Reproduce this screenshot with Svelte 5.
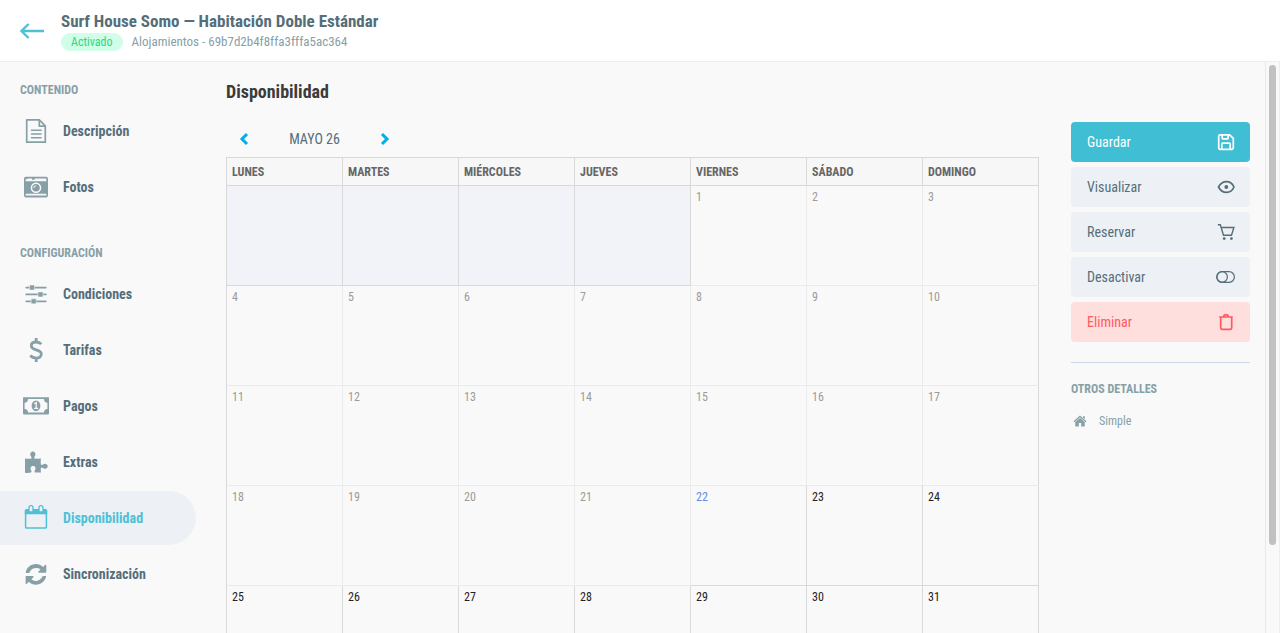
<script>
  const sections = [
    {
      title: 'Contenido',
      items: [
        { id: 'description', label: 'Descripción' },
        { id: 'photos', label: 'Fotos' },
      ],
    },
    {
      title: 'Configuración',
      items: [
        { id: 'conditions', label: 'Condiciones' },
        { id: 'rates', label: 'Tarifas' },
        { id: 'payments', label: 'Pagos' },
        { id: 'extras', label: 'Extras' },
        { id: 'availability', label: 'Disponibilidad' },
        { id: 'sync', label: 'Sincronización' },
      ],
    },
  ]

  const actions = [
    { id: 'save', label: 'Guardar' },
    { id: 'view', label: 'Visualizar' },
    { id: 'book', label: 'Reservar' },
    { id: 'disable', label: 'Desactivar' },
    { id: 'remove', label: 'Eliminar' },
  ]

  const weekdays = ['Lunes', 'Martes', 'Miércoles', 'Jueves', 'Viernes', 'Sábado', 'Domingo']
  const today = 22
  // May 2026 starts on a Friday: four empty cells, then 31 days
  const weeks = Array.from({ length: 5 }, (_, w) =>
    Array.from({ length: 7 }, (_, d) => w * 7 + d - 3)
  )

  let active = $state('availability')
</script>

{#snippet icon(id)}
  <svg class="icon" viewBox="0 0 28 28" aria-hidden="true">
    {#if id === 'description'}
      <path d="M4.700 2.900h12.600l6 6v16.300H4.700zM17.300 3v6.100h6" fill="none" stroke="currentColor" stroke-width="1.700" stroke-linejoin="round" />
      <path d="M9.500 13.200h9.600M9.500 17h9.600M9.500 20.800h9.600" stroke="currentColor" stroke-width="1.500" stroke-linecap="round" />
    {:else if id === 'photos'}
      <path fill="currentColor" fill-rule="evenodd" d="M4 3.800h20q2 0 2 2v16.600q0 2-2 2H4q-2 0-2-2V5.800q0-2 2-2zM3.700 6v2.200h20.600V5.600H13l-.6 1.100H10V5.600H5.400V6.300zM3.700 20.800v1.800h20.600v-1.800zM14 9.500a5.300 5.300 0 1 0 0 10.600 5.300 5.300 0 0 0 0-10.600z" />
      <circle cx="14" cy="14.800" r="3.800" fill="currentColor" />
      <path d="M11.800 15a2.200 2.200 0 0 1 2.200-2.200" fill="none" stroke="#f9f9f9" />
    {:else if id === 'conditions'}
      <path d="M4.200 7.600h19.600M4.200 14.400h19.600M4.200 21.300h19.600" stroke="currentColor" stroke-width="1.700" stroke-linecap="round" />
      <path d="M7.500 5.100h5v5h-5zM16 11.900h5v5h-5zM9.200 18.800h5v5h-5z" fill="currentColor" stroke="#f9f9f9" stroke-width=".5" />
    {:else if id === 'rates'}
      <path d="M19.300 8.200C18 6.700 16.200 6 14.200 6c-2.800 0-4.900 1.400-4.900 3.700 0 5.300 10 3 10 8.400 0 2.500-2.200 4-5 4-2.300 0-4.500-.9-5.900-2.700M14.200 2v4M14.200 22v4" fill="none" stroke="currentColor" stroke-width="2.800" />
    {:else if id === 'payments'}
      <path fill="currentColor" fill-rule="evenodd" d="M1.800 5.200h24.400q.8 0 .8.800v15.600q0 .8-.8.800H1.800q-.8 0-.8-.8V6q0-.8.800-.8zM6 7q0 3.700-3.400 3.700v6.200Q6 16.900 6 20.600h16q0-3.700 3.400-3.700v-6.200Q22 10.700 22 7z" />
      <ellipse cx="14" cy="13.800" rx="4.400" ry="5.400" fill="currentColor" />
      <path d="m12.200 11.800 2-1.200v5.700m-2 0h4" fill="none" stroke="#f9f9f9" stroke-width="1.300" />
    {:else if id === 'extras'}
      <path fill="currentColor" d="M3 10.500q3.500.7 6.200 0c1-.3.200-1.700-.5-2.600-1-1.500-.2-4.300 2.100-4.300s3.300 2.800 2.200 4.300c-.8 1-1.300 2-.3 2.500 2 .7 4.500.3 6.300.1-.3 2.200-.5 4.200 0 6 .4 1 1.500.5 2.500-.3 1.700-1.200 4.200-.3 4.200 2s-2.700 3.200-4.200 2c-1-.8-2.100-1.200-2.500-.2-.4 1.400-.2 3 0 4.400H13.500c-1.400 0-1-1.700-.4-2.700.8-1.400.4-3.700-2-3.700s-3 2.300-2.200 3.700c.7 1.100 1 2.700-.2 2.900q-2.800.5-5.700.1z" />
    {:else if id === 'availability'}
      <path d="M3.600 7.500h20.800v15.400q0 1.200-1.200 1.200H4.800q-1.200 0-1.200-1.200z" fill="none" stroke="currentColor" stroke-width="1.500" />
      <path d="M2.800 6.500Q2.800 5 4.300 5h19.400q1.500 0 1.500 1.500v3.800H2.800z" fill="currentColor" />
      <path d="M7 8V3.700a2 2 0 0 1 4 0V8zM17 8V3.700a2 2 0 0 1 4 0V8z" fill="#edf1f5" stroke="currentColor" stroke-width="1.300" />
    {:else if id === 'sync'}
      <path fill="currentColor" d="M3.700 12.500C4.500 7.500 8.800 4 13.900 4c2.700 0 5.300 1.100 7.200 2.900l1.900-1.900c.5-.5 1.300-.2 1.300.5V12q0 .8-.8.800h-6.500c-.7 0-1-.8-.5-1.300l2-2a7 7 0 0 0-11 2.900q-.2.500-.7.500H4.300q-.6 0-.6-.4zM24.200 16.300c-.9 4.800-5.200 8.400-10.300 8.400-2.700 0-5.200-1-7.100-2.900l-1.900 1.900c-.5.500-1.300.2-1.300-.5v-6.400q0-.8.8-.8h6.500c.7 0 1 .8.500 1.300l-2 2a7 7 0 0 0 11-2.900q.2-.5.700-.5h2.500q.6 0 .6.400z" />
    {/if}
  </svg>
{/snippet}

{#snippet actionIcon(id)}
  <svg class="icon" viewBox="0 0 20 20" fill="none" stroke="currentColor" stroke-width="1.700" aria-hidden="true">
    {#if id === 'save'}
      <path d="M4.300 2.800h9.300l3.700 3.500v9.400q0 1.600-1.600 1.600H4.300q-1.600 0-1.600-1.600V4.300q0-1.500 1.600-1.500zM5.800 17v-4.700q0-1.200 1.200-1.200h6q1.200 0 1.200 1.200V17M6.200 3v2.900q0 1 1 1h3.900q1 0 1-1V3" />
    {:else if id === 'view'}
      <path d="M2.500 10C4.300 6.600 7 4.600 10.500 4.600s6 2 7.500 5.400c-1.500 3.400-4 5.400-7.500 5.400S4.300 13.400 2.500 10z" />
      <circle cx="10.300" cy="10" r="1.900" fill="currentColor" stroke="none" />
    {:else if id === 'book'}
      <path d="M1.900 2.800h2.400l3.200 10.400h8l2.400-7.700H5.200" stroke-width="1.400" />
      <circle cx="8.200" cy="16.600" r="1.400" fill="currentColor" stroke="none" />
      <circle cx="15.400" cy="16.600" r="1.400" fill="currentColor" stroke="none" />
    {:else if id === 'disable'}
      <rect x=".8" y="4.700" width="17.600" height="10.600" rx="5.300" stroke-width="1.200" />
      <circle cx="6.100" cy="10" r="5.300" stroke-width="1.200" />
    {:else if id === 'remove'}
      <path d="M3.200 5h13.600M4.700 5v10.600q0 1.700 1.700 1.700h7.600q1.700 0 1.700-1.700V5M7.900 5V3.700q0-.9.900-.9h2.400q.9 0 .9.900V5" />
    {/if}
  </svg>
{/snippet}

<div class="app">
  <header>
    <a class="back" href="#list" aria-label="Volver">
      <svg viewBox="0 0 24 16" width="24" height="16" fill="none" stroke="currentColor" stroke-width="2.400" aria-hidden="true">
        <path d="M24 8H1.800M8.600 1 1.500 8l7.100 7" />
      </svg>
    </a>
    <div>
      <h1>Surf House Somo — Habitación Doble Estándar</h1>
      <p class="meta"><span class="status">Activado</span>Alojamientos - 69b7d2b4f8ffa3fffa5ac364</p>
    </div>
  </header>

  <div class="body">
    <nav>
      {#each sections as section}
        <section>
          <h3>{section.title}</h3>
          {#each section.items as item}
            <a href="#{item.id}" class:active={active === item.id} onclick={() => (active = item.id)}>
              {@render icon(item.id)}
              {item.label}
            </a>
          {/each}
        </section>
      {/each}
    </nav>

    <main>
      <h2>Disponibilidad</h2>
      <div class="columns">
        <div class="calendar">
          <div class="month">
            <button aria-label="Mes anterior">
              <svg viewBox="0 0 12 14" width="12" height="14" fill="none" stroke="currentColor" stroke-width="3" aria-hidden="true"><path d="M9 2 4 7l5 5" /></svg>
            </button>
            <span>MAYO 26</span>
            <button aria-label="Mes siguiente">
              <svg viewBox="0 0 12 14" width="12" height="14" fill="none" stroke="currentColor" stroke-width="3" aria-hidden="true"><path d="m3 2 5 5-5 5" /></svg>
            </button>
          </div>
          <table>
            <thead>
              <tr>
                {#each weekdays as day}<th>{day}</th>{/each}
              </tr>
            </thead>
            <tbody>
              {#each weeks as week}
                <tr>
                  {#each week as day}
                    <td class:empty={day < 1} class:past={day > 0 && day < today} class:today={day === today}>
                      {day > 0 ? day : ''}
                    </td>
                  {/each}
                </tr>
              {/each}
            </tbody>
          </table>
        </div>

        <aside>
          <div class="actions">
            {#each actions as action}
              <button class={action.id}>
                {action.label}
                {@render actionIcon(action.id)}
              </button>
            {/each}
          </div>
          <hr />
          <h3>Otros detalles</h3>
          <p class="detail">
            <svg viewBox="0 0 14 12" width="14" height="12" fill="currentColor" aria-hidden="true">
              <path d="M7 .5 13.500 6.300l-.8.900L7 2.200 1.300 7.200l-.8-.9zM10 1.200h1.800v2.900L10 2.600zM7 3l4.700 4.100v3.700q0 .6-.6.600H8.200V8H5.800v3.400H2.900q-.6 0-.6-.6V7.100z" />
            </svg>
            Simple
          </p>
        </aside>
      </div>
    </main>

    <div class="scrollbar" aria-hidden="true"><span></span></div>
  </div>
</div>

<style>
  :global(body) {
    margin: 0;
    background: #f9f9f9;
  }
  .app {
    height: 100vh;
    display: flex;
    flex-direction: column;
    overflow: hidden;
    font-family: "Roboto Condensed", "Liberation Sans Narrow", Roboto, sans-serif;
    font-size: 14px;
    color: #546e7a;
  }
  h1, h2, h3, p { margin: 0; }
  button {
    border: 0;
    background: none;
    font: inherit;
    color: inherit;
    cursor: pointer;
  }

  header {
    display: flex;
    align-items: center;
    gap: 17px;
    flex: none;
    height: 61px;
    padding: 0 20px;
    background: #fff;
    border-bottom: 1px solid #eee;
  }
  .back {
    display: flex;
    color: #4fc0d6;
  }
  h1 {
    padding-bottom: 2px;
    font-size: 17px;
    line-height: 20px;
    font-weight: 700;
  }
  .meta {
    display: flex;
    align-items: center;
    gap: 9px;
    font-size: 13px;
    line-height: 18px;
    color: #87a0a7;
  }
  .status {
    padding: 0 10px;
    border-radius: 9px;
    background: #d0fee8;
    color: #2cd882;
    font-size: 12px;
  }

  .body {
    flex: 1;
    min-height: 0;
    display: flex;
    background: #f9f9f9;
  }
  nav {
    flex: none;
    width: 196px;
    padding-top: 18px;
  }
  nav section {
    display: flex;
    flex-direction: column;
    gap: 2px;
    margin-bottom: 29px;
  }
  h3 {
    font-size: 12px;
    line-height: 20px;
    font-weight: 700;
    text-transform: uppercase;
    color: #87a0a7;
  }
  nav h3 { padding: 0 20px 2px; }
  nav a {
    display: flex;
    align-items: center;
    gap: 13px;
    height: 54px;
    padding-left: 22px;
    border-radius: 0 27px 27px 0;
    color: #546e7a;
    font-weight: 700;
    text-decoration: none;
  }
  nav .icon {
    width: 28px;
    height: 28px;
    color: #87a0a7;
  }
  nav a.active { background: #edf1f5; }
  nav a.active, nav a.active .icon { color: #4fc0d6; }

  main {
    flex: 1;
    min-width: 0;
    padding: 18px 15px 0 30px;
    overflow: hidden;
  }
  h2 {
    font-size: 18px;
    line-height: 24px;
    color: #3b3b3b;
  }
  .columns {
    display: flex;
    gap: 32px;
    padding-top: 18px;
  }
  .calendar {
    flex: 1;
    min-width: 0;
  }
  .month {
    display: flex;
    align-items: center;
    justify-content: space-between;
    width: 177px;
    height: 33px;
    padding-bottom: 2px;
  }
  .month button {
    display: flex;
    padding: 4px 12px;
    color: #00aeea;
  }
  table {
    width: 100%;
    table-layout: fixed;
    border-spacing: 0;
    border-left: 1px solid #d9d9d9;
    font-size: 12px;
    line-height: 14px;
  }
  th, td {
    box-sizing: border-box;
    padding: 4px 5px;
    text-align: left;
    vertical-align: top;
    border-right: 1px solid #d9d9d9;
    border-bottom: 1px solid #d9d9d9;
  }
  th {
    height: 29px;
    padding: 0 5px;
    vertical-align: middle;
    border-top: 1px solid #d9d9d9;
    background: #f7f7f7;
    color: #666;
    text-transform: uppercase;
  }
  td {
    height: 100px;
    color: #222;
  }
  td.empty { background: #f2f3f8; }
  td.past {
    color: #9b9b9b;
    border-color: #ebebeb;
  }
  td.past:last-child { border-right-color: #d9d9d9; }
  td.today { color: #5b8def; }

  aside {
    flex: none;
    width: 179px;
  }
  .actions {
    display: flex;
    flex-direction: column;
    gap: 5px;
  }
  .actions button {
    display: flex;
    align-items: center;
    justify-content: space-between;
    height: 40px;
    padding: 0 14px 0 16px;
    border-radius: 4px;
    background: #edf1f5;
  }
  .actions .icon {
    width: 20px;
    height: 20px;
  }
  .actions .save {
    background: #40bed4;
    color: #fff;
  }
  .actions .remove {
    background: #ffdede;
    color: #ff5a5f;
  }
  hr {
    margin: 20px 0 16px;
    border: 0;
    border-top: 1px solid #ccd8e3;
  }
  .detail {
    display: flex;
    align-items: center;
    gap: 12px;
    padding: 14px 2px;
    font-size: 12px;
    line-height: 16px;
    color: #87a0a7;
  }

  .scrollbar {
    box-sizing: border-box;
    flex: none;
    width: 15px;
    padding: 3px;
    border-left: 1px solid #e8e8e8;
    border-right: 1px solid #ededed;
  }
  .scrollbar span {
    display: block;
    height: 85%;
    border-radius: 4px;
    background: #c1c1c1;
  }
</style>
